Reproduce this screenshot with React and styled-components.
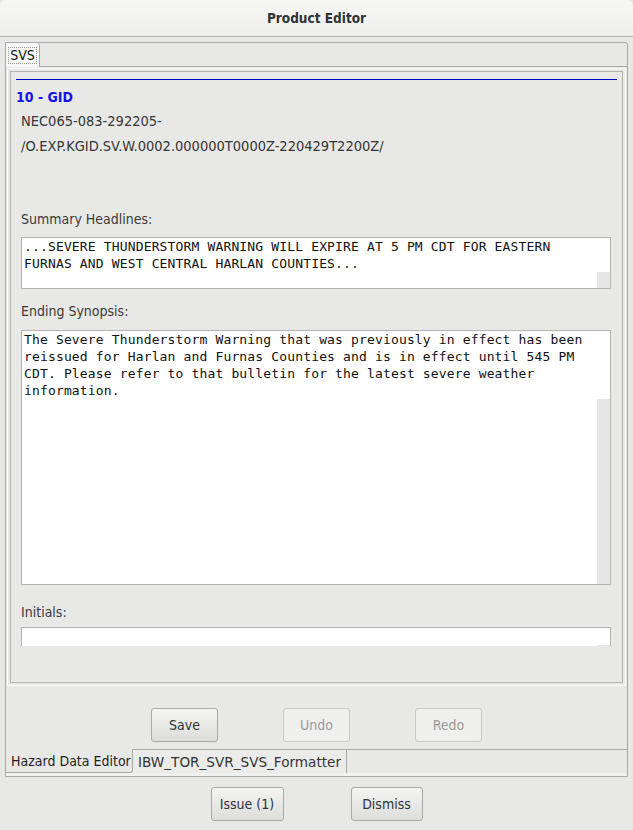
import React from "react";
import styled, { createGlobalStyle } from "styled-components";

const GlobalStyle = createGlobalStyle`
  html, body {
    margin: 0;
    padding: 0;
  }
  body {
    width: 633px;
    height: 830px;
    overflow: hidden;
    background: #e8e8e7;
    font-family: "DejaVu Sans Condensed", "DejaVu Sans", sans-serif;
    font-stretch: condensed;
  }
`;

const Window = styled.div`
  width: 633px;
  height: 830px;
  display: flex;
  flex-direction: column;
  background: #e8e8e7;
`;

const TitleBar = styled.div`
  height: 37px;
  box-sizing: border-box;
  flex: none;
  display: flex;
  align-items: center;
  justify-content: center;
  background: linear-gradient(#f6f6f5, #efefee);
  border-bottom: 1px solid #b5b5b2;
  border-radius: 6px 6px 0 0;
  font-weight: bold;
  font-size: 13.5px;
  color: #2e3436;
`;

const Outer = styled.div`
  margin: 5px 5px 0 5px;
  border: 1px solid #a8a8a8;
  border-top-right-radius: 3px;
  display: flex;
  flex-direction: column;
`;

const TabStrip = styled.div`
  height: 24px;
  box-sizing: border-box;
  display: flex;
  border-bottom: 1px solid #a8a8a8;
`;

const TopTab = styled.div`
  width: 34px;
  height: 24px;
  box-sizing: border-box;
  background: #f7f7f7;
  border-right: 1px solid #a8a8a8;
  border-top-right-radius: 3px;
  display: flex;
  align-items: center;
  justify-content: center;
  margin-bottom: -1px;
`;

const Focus = styled.span`
  border: 1px dotted #9a9a9a;
  padding: 0 1px;
  font-size: 14px;
  line-height: 15px;
  color: #111;
`;

const Body = styled.div`
  padding: 4px 4px 0 4px;
`;

const Panel = styled.div`
  height: 612px;
  box-sizing: border-box;
  border: 1px solid #b2b2b2;
  box-shadow: 0 0 0 2px #e8e8e7, 0 0 0 3px #fbfbfb;
  padding-top: 7px;
  display: flex;
  flex-direction: column;
  overflow: hidden;
`;

const Rule = styled.div`
  height: 1px;
  margin: 0 5px;
  background: #0000c8;
`;

const Heading = styled.div`
  margin: 8px 5px 0;
  font-size: 14px;
  line-height: 18px;
  font-weight: bold;
  color: #1212e6;
`;

const InfoBlock = styled.div`
  margin: 3px 10px 0;
`;

const InfoLine = styled.div`
  font-size: 14.5px;
  line-height: 25px;
  color: #353535;
`;

const Label = styled.div`
  margin: ${(p) => p.$mt}px 10px ${(p) => p.$mb}px;
  font-size: 14px;
  line-height: 16px;
  color: #3a3a3a;
`;

const TextBox = styled.div`
  margin: 0 11px 0 10px;
  height: ${(p) => p.$h}px;
  box-sizing: border-box;
  flex: none;
  background: #fff;
  border: 1px solid #b4b4b4;
  ${(p) => (p.$open ? "border-bottom: none;" : "")}
  display: grid;
  grid-template-columns: 1fr 13px;
  grid-template-rows: auto 1fr;
`;

const BoxText = styled.div`
  grid-column: 1;
  grid-row: 1;
  padding-left: 2px;
  font-family: "DejaVu Sans Mono", monospace;
  font-size: 13px;
  letter-spacing: 0.15px;
  line-height: 17px;
  color: #111;
  white-space: pre;
`;

const Track = styled.div`
  grid-column: 2;
  grid-row: 2;
  background: #e6e6e5;
`;

const ButtonRow = styled.div`
  display: flex;
  justify-content: center;
  gap: ${(p) => p.$gap}px;
  margin-top: ${(p) => p.$mt}px;
`;

const Button = styled.button`
  width: ${(p) => p.$w}px;
  height: 34px;
  box-sizing: border-box;
  padding: 0;
  border: 1px solid ${(p) => (p.disabled ? "#c9c9c8" : "#a9a9a8")};
  border-radius: 3px;
  background: ${(p) =>
    p.disabled ? "#efefee" : "linear-gradient(#f4f4f3, #dddddc)"};
  color: ${(p) => (p.disabled ? "#9a9a9a" : "#2e3436")};
  font-family: inherit;
  font-stretch: condensed;
  font-size: 14px;
`;

const BottomTabs = styled.div`
  margin-top: 7px;
  height: 24px;
  display: flex;
`;

const BottomTab = styled.div`
  width: ${(p) => p.$w}px;
  height: 24px;
  box-sizing: border-box;
  display: flex;
  align-items: center;
  padding-left: ${(p) => (p.$active ? 5 : 5)}px;
  font-size: ${(p) => (p.$active ? 14 : 13.6)}px;
  font-stretch: ${(p) => (p.$active ? "condensed" : "normal")};
  font-family: ${(p) =>
    p.$active ? '"DejaVu Sans Condensed", "DejaVu Sans"' : '"DejaVu Sans"'},
    sans-serif;
  color: ${(p) => (p.$active ? "#1e1e1e" : "#333")};
  border-right: 1px solid #a8a8a8;
  ${(p) =>
    p.$active
      ? "border-bottom: 1px solid #a8a8a8; border-bottom-right-radius: 3px;"
      : "border-top: 1px solid #a8a8a8; background: #ebebea;"}
`;

const TabRest = styled.div`
  flex: 1;
  border-top: 1px solid #a8a8a8;
`;

const Spacer = styled.div`
  height: 3px;
  background: #f1f1f0;
`;

function Field({ label, mt, mb, h, lines, open }) {
  return (
    <>
      <Label $mt={mt} $mb={mb}>{label}</Label>
      <TextBox $h={h} $open={open}>
        <BoxText>{lines.join("\n")}</BoxText>
        <Track />
      </TextBox>
    </>
  );
}

export default function App() {
  return (
    <Window>
      <GlobalStyle />
      <TitleBar>Product Editor</TitleBar>
      <Outer>
        <TabStrip>
          <TopTab>
            <Focus>SVS</Focus>
          </TopTab>
        </TabStrip>
        <Body>
          <Panel>
            <Rule />
            <Heading>10 - GID</Heading>
            <InfoBlock>
              <InfoLine>NEC065-083-292205-</InfoLine>
              <InfoLine>/O.EXP.KGID.SV.W.0002.000000T0000Z-220429T2200Z/</InfoLine>
            </InfoBlock>
            <Field
              label="Summary Headlines:"
              mt={52}
              mb={10}
              h={52}
              lines={[
                "...SEVERE THUNDERSTORM WARNING WILL EXPIRE AT 5 PM CDT FOR EASTERN",
                "FURNAS AND WEST CENTRAL HARLAN COUNTIES...",
              ]}
            />
            <Field
              label="Ending Synopsis:"
              mt={14}
              mb={11}
              h={255}
              lines={[
                "The Severe Thunderstorm Warning that was previously in effect has been",
                "reissued for Harlan and Furnas Counties and is in effect until 545 PM",
                "CDT. Please refer to that bulletin for the latest severe weather",
                "information.",
              ]}
            />
            <Field label="Initials:" mt={19} mb={7} h={19} lines={["\u00a0"]} open />
          </Panel>
          <ButtonRow $gap={65} $mt={25}>
            <Button $w={67}>Save</Button>
            <Button $w={67} disabled>Undo</Button>
            <Button $w={67} disabled>Redo</Button>
          </ButtonRow>
        </Body>
        <BottomTabs>
          <BottomTab $w={127} $active>Hazard Data Editor</BottomTab>
          <BottomTab $w={214}>IBW_TOR_SVR_SVS_Formatter</BottomTab>
          <TabRest />
        </BottomTabs>
        <Spacer />
      </Outer>
      <ButtonRow $gap={67} $mt={10}>
        <Button $w={73}>Issue (1)</Button>
        <Button $w={72}>Dismiss</Button>
      </ButtonRow>
    </Window>
  );
}
